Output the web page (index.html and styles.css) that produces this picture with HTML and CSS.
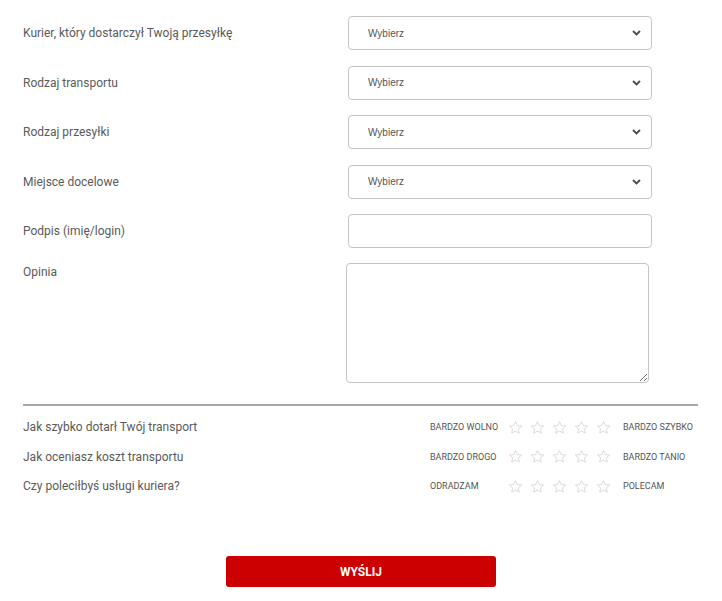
FILE: index.html
```html
<!DOCTYPE html>
<html lang="pl">
<head>
<meta charset="utf-8">
<link rel="stylesheet" href="styles.css">
</head>
<body>
<form class="review">
  <div class="fields">
    <div class="row">
      <label class="label">Kurier, który dostarczył Twoją przesyłkę</label>
      <div class="select-wrap">
        <select class="select"><option>Wybierz</option></select>
        <svg class="chev" width="9" height="6" viewBox="0 0 9 6"><path d="M1 1 L4.5 4.5 L8 1" fill="none" stroke="#4a4a4a" stroke-width="1.8"/></svg>
      </div>
    </div>
    <div class="row">
      <label class="label">Rodzaj transportu</label>
      <div class="select-wrap">
        <select class="select"><option>Wybierz</option></select>
        <svg class="chev" width="9" height="6" viewBox="0 0 9 6"><path d="M1 1 L4.5 4.5 L8 1" fill="none" stroke="#4a4a4a" stroke-width="1.8"/></svg>
      </div>
    </div>
    <div class="row">
      <label class="label">Rodzaj przesyłki</label>
      <div class="select-wrap">
        <select class="select"><option>Wybierz</option></select>
        <svg class="chev" width="9" height="6" viewBox="0 0 9 6"><path d="M1 1 L4.5 4.5 L8 1" fill="none" stroke="#4a4a4a" stroke-width="1.8"/></svg>
      </div>
    </div>
    <div class="row">
      <label class="label">Miejsce docelowe</label>
      <div class="select-wrap">
        <select class="select"><option>Wybierz</option></select>
        <svg class="chev" width="9" height="6" viewBox="0 0 9 6"><path d="M1 1 L4.5 4.5 L8 1" fill="none" stroke="#4a4a4a" stroke-width="1.8"/></svg>
      </div>
    </div>
    <div class="row">
      <label class="label">Podpis (imię/login)</label>
      <input class="input" type="text">
    </div>
    <div class="row row-top">
      <label class="label">Opinia</label>
      <textarea class="textarea"></textarea>
    </div>
  </div>

  <div class="ratings">
    <div class="rating">
      <span class="rq">Jak szybko dotarł Twój transport</span>
      <span class="rmin">BARDZO WOLNO</span>
      <span class="stars">
        <svg class="star" viewBox="0 0 24 24"><path d="M12 2.5l2.9 6.4 6.9.7-5.2 4.6 1.5 6.8L12 17.5 5.9 21l1.5-6.8-5.2-4.6 6.9-.7z"/></svg>
        <svg class="star" viewBox="0 0 24 24"><path d="M12 2.5l2.9 6.4 6.9.7-5.2 4.6 1.5 6.8L12 17.5 5.9 21l1.5-6.8-5.2-4.6 6.9-.7z"/></svg>
        <svg class="star" viewBox="0 0 24 24"><path d="M12 2.5l2.9 6.4 6.9.7-5.2 4.6 1.5 6.8L12 17.5 5.9 21l1.5-6.8-5.2-4.6 6.9-.7z"/></svg>
        <svg class="star" viewBox="0 0 24 24"><path d="M12 2.5l2.9 6.4 6.9.7-5.2 4.6 1.5 6.8L12 17.5 5.9 21l1.5-6.8-5.2-4.6 6.9-.7z"/></svg>
        <svg class="star" viewBox="0 0 24 24"><path d="M12 2.5l2.9 6.4 6.9.7-5.2 4.6 1.5 6.8L12 17.5 5.9 21l1.5-6.8-5.2-4.6 6.9-.7z"/></svg>
      </span>
      <span class="rmax">BARDZO SZYBKO</span>
    </div>
    <div class="rating">
      <span class="rq">Jak oceniasz koszt transportu</span>
      <span class="rmin">BARDZO DROGO</span>
      <span class="stars">
        <svg class="star" viewBox="0 0 24 24"><path d="M12 2.5l2.9 6.4 6.9.7-5.2 4.6 1.5 6.8L12 17.5 5.9 21l1.5-6.8-5.2-4.6 6.9-.7z"/></svg>
        <svg class="star" viewBox="0 0 24 24"><path d="M12 2.5l2.9 6.4 6.9.7-5.2 4.6 1.5 6.8L12 17.5 5.9 21l1.5-6.8-5.2-4.6 6.9-.7z"/></svg>
        <svg class="star" viewBox="0 0 24 24"><path d="M12 2.5l2.9 6.4 6.9.7-5.2 4.6 1.5 6.8L12 17.5 5.9 21l1.5-6.8-5.2-4.6 6.9-.7z"/></svg>
        <svg class="star" viewBox="0 0 24 24"><path d="M12 2.5l2.9 6.4 6.9.7-5.2 4.6 1.5 6.8L12 17.5 5.9 21l1.5-6.8-5.2-4.6 6.9-.7z"/></svg>
        <svg class="star" viewBox="0 0 24 24"><path d="M12 2.5l2.9 6.4 6.9.7-5.2 4.6 1.5 6.8L12 17.5 5.9 21l1.5-6.8-5.2-4.6 6.9-.7z"/></svg>
      </span>
      <span class="rmax">BARDZO TANIO</span>
    </div>
    <div class="rating">
      <span class="rq">Czy poleciłbyś usługi kuriera?</span>
      <span class="rmin">ODRADZAM</span>
      <span class="stars">
        <svg class="star" viewBox="0 0 24 24"><path d="M12 2.5l2.9 6.4 6.9.7-5.2 4.6 1.5 6.8L12 17.5 5.9 21l1.5-6.8-5.2-4.6 6.9-.7z"/></svg>
        <svg class="star" viewBox="0 0 24 24"><path d="M12 2.5l2.9 6.4 6.9.7-5.2 4.6 1.5 6.8L12 17.5 5.9 21l1.5-6.8-5.2-4.6 6.9-.7z"/></svg>
        <svg class="star" viewBox="0 0 24 24"><path d="M12 2.5l2.9 6.4 6.9.7-5.2 4.6 1.5 6.8L12 17.5 5.9 21l1.5-6.8-5.2-4.6 6.9-.7z"/></svg>
        <svg class="star" viewBox="0 0 24 24"><path d="M12 2.5l2.9 6.4 6.9.7-5.2 4.6 1.5 6.8L12 17.5 5.9 21l1.5-6.8-5.2-4.6 6.9-.7z"/></svg>
        <svg class="star" viewBox="0 0 24 24"><path d="M12 2.5l2.9 6.4 6.9.7-5.2 4.6 1.5 6.8L12 17.5 5.9 21l1.5-6.8-5.2-4.6 6.9-.7z"/></svg>
      </span>
      <span class="rmax">POLECAM</span>
    </div>
  </div>

  <div class="actions">
    <button class="submit" type="button">WYŚLIJ</button>
  </div>
</form>
</body>
</html>
```

FILE: styles.css
```css
* { box-sizing: border-box; }
html, body { margin: 0; padding: 0; background: #fff; }
body { font-family: Roboto, "Liberation Sans", Arial, sans-serif; color: #555; }

.review { padding: 16px 25px 0 23px; width: 722px; }

.fields { display: flex; flex-direction: column; gap: 15.5px; }
.row { display: grid; grid-template-columns: 325px 304px; align-items: center; }
.row-top { align-items: start; }
.label { font-size: 12px; color: #5a5a5a; line-height: 16px; }

.select-wrap { position: relative; height: 34px; }
.select {
  appearance: none; -webkit-appearance: none;
  width: 304px; height: 34px; margin: 0;
  border: 1px solid #c4c4c4; border-radius: 4px; background: #fff;
  padding: 0 0 0 19px;
  font-family: "Liberation Sans", Arial, sans-serif; font-size: 10px; color: #555;
}
.chev { position: absolute; right: 11px; top: 14px; }

.input {
  width: 304px; height: 34px; margin: 0; display: block;
  border: 1px solid #c4c4c4; border-radius: 4px; background: #fff;
}
.textarea {
  width: 303px; height: 120px; margin: -1px 0 0 -2px; display: block;
  border: 1px solid #c4c4c4; border-radius: 4px; background: #fff;
  resize: vertical;
}

.ratings {
  margin-top: 21px; border-top: 2px solid #a8a8a8;
  padding-top: 13px; width: 675px;
  display: flex; flex-direction: column; gap: 12px;
}
.rating { display: flex; align-items: center; height: 17.5px; }
.rq { width: 407px; font-size: 12px; color: #5a5a5a; }
.rmin { width: 78px; font-size: 9px; color: #555; }
.stars { display: flex; gap: 7px; width: 115px; }
.star { width: 15px; height: 15px; fill: none; stroke: #d3d3d3; stroke-width: 1.3; stroke-linejoin: round; }
.rmax { font-size: 9px; color: #555; }

.actions { display: flex; padding: 61px 0 0 203px; }
.submit {
  width: 270px; height: 31px; border: 0; border-radius: 3px;
  background: #cd0000; color: #fff;
  font-family: Roboto, "Liberation Sans", Arial, sans-serif; font-weight: 700; font-size: 12px;
  cursor: pointer;
}
```
